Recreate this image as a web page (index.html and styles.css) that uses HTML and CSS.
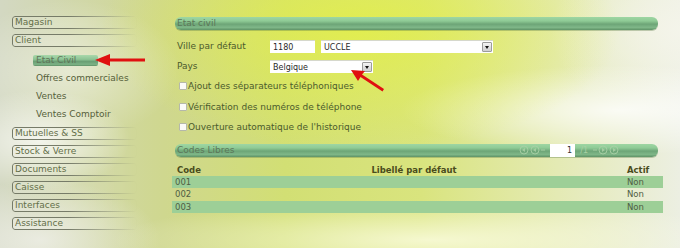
FILE: index.html
```html
<!DOCTYPE html>
<html lang="fr">
<head>
<meta charset="utf-8">
<title>Etat civil</title>
<link rel="stylesheet" href="styles.css">
</head>
<body>
<div class="screen">
  <nav class="sidebar">
    <div class="nav-box">Magasin</div>
    <div class="nav-box">Client</div>
    <ul class="sub">
      <li class="sub-item active"><span class="hl">Etat Civil</span></li>
      <li class="sub-item">Offres commerciales</li>
      <li class="sub-item">Ventes</li>
      <li class="sub-item">Ventes Comptoir</li>
    </ul>
    <div class="nav-box">Mutuelles &amp; SS</div>
    <div class="nav-box">Stock &amp; Verre</div>
    <div class="nav-box">Documents</div>
    <div class="nav-box">Caisse</div>
    <div class="nav-box">Interfaces</div>
    <div class="nav-box">Assistance</div>
  </nav>

  <main class="main">
    <div class="bar"><span class="bar-title">Etat civil</span></div>

    <div class="form-row first">
      <span class="label">Ville par défaut</span>
      <span class="input zip">1180</span>
      <span class="select city"><span class="sel-text">UCCLE</span><span class="sel-btn"></span></span>
    </div>
    <div class="form-row">
      <span class="label">Pays</span>
      <span class="select country"><span class="sel-text">Belgique</span><span class="sel-btn"></span></span>
    </div>

    <div class="checks">
      <div class="check-row"><span class="box"></span>Ajout des séparateurs téléphoniques</div>
      <div class="check-row"><span class="box"></span>Vérification des numéros de téléphone</div>
      <div class="check-row"><span class="box"></span>Ouverture automatique de l'historique</div>
    </div>

    <div class="bar codes">
      <span class="bar-title">Codes Libres</span>
      <span class="pager">
        <svg class="pg-icons" width="28" height="10" viewBox="0 0 28 10">
          <circle cx="5" cy="5" r="4" fill="none" stroke="#a9cfa6" stroke-width="1"/>
          <path d="M3 5 L6 3 L6 7 Z" fill="#a9cfa6"/>
          <circle cx="16" cy="5" r="4" fill="none" stroke="#a9cfa6" stroke-width="1"/>
          <path d="M14 5 L17 3 L17 7 Z" fill="#a9cfa6"/>
          <path d="M22 5 L26 5" stroke="#a9cfa6" stroke-width="1"/>
        </svg>
        <span class="page-input">1</span>
        <span class="page-total">/1</span>
        <svg class="pg-icons" width="28" height="10" viewBox="0 0 28 10">
          <path d="M1 5 L5 5" stroke="#a9cfa6" stroke-width="1"/>
          <circle cx="11" cy="5" r="4" fill="none" stroke="#a9cfa6" stroke-width="1"/>
          <path d="M13 5 L10 3 L10 7 Z" fill="#a9cfa6"/>
          <circle cx="22" cy="5" r="4" fill="none" stroke="#a9cfa6" stroke-width="1"/>
          <path d="M24 5 L21 3 L21 7 Z" fill="#a9cfa6"/>
        </svg>
      </span>
    </div>

    <div class="table">
      <div class="trow thead">
        <span class="c-code">Code</span>
        <span class="c-lib">Libellé par défaut</span>
        <span class="c-act">Actif</span>
      </div>
      <div class="trow alt">
        <span class="c-code">001</span><span class="c-lib"></span><span class="c-act">Non</span>
      </div>
      <div class="trow">
        <span class="c-code">002</span><span class="c-lib"></span><span class="c-act">Non</span>
      </div>
      <div class="trow alt">
        <span class="c-code">003</span><span class="c-lib"></span><span class="c-act">Non</span>
      </div>
    </div>
  </main>

  <svg class="arrow arrow-side" width="52" height="14" viewBox="0 0 52 14">
    <path d="M0 7 L15 1 L15 5.5 L50 5.5 L50 8.5 L15 8.5 L15 13 Z" fill="#e01010"/>
  </svg>
  <svg class="arrow arrow-pays" width="36" height="24" viewBox="0 0 36 24">
    <path d="M1 1 L15 2 L12 5.5 L34 20 L32.5 22.5 L10.5 8 L8 12 Z" fill="#e01010"/>
  </svg>
</div>
</body>
</html>
```

FILE: styles.css
```css
* { box-sizing: border-box; }

html, body {
  margin: 0;
  padding: 0;
}

body {
  width: 680px;
  height: 248px;
  overflow: hidden;
  font-family: "DejaVu Sans", Verdana, sans-serif;
  font-size: 9px;
  color: #4b5a2c;
}

.screen {
  position: relative;
  display: flex;
  width: 680px;
  height: 248px;
  background:
    radial-gradient(ellipse 90px 50px at 40px 140px, rgba(255,255,255,0.75), rgba(255,255,255,0)),
    radial-gradient(ellipse 110px 70px at 70px 70px, rgba(255,255,255,0.45), rgba(255,255,255,0)),
    radial-gradient(ellipse 260px 120px at 360px 30px, rgba(228,240,70,0.8), rgba(228,240,70,0)),
    radial-gradient(ellipse 220px 45px at 620px 110px, rgba(255,255,255,0.8), rgba(255,255,255,0)),
    radial-gradient(ellipse 130px 90px at 680px 30px, rgba(245,245,235,0.9), rgba(245,245,235,0)),
    radial-gradient(ellipse 320px 40px at 430px 240px, rgba(255,255,235,0.75), rgba(255,255,235,0)),
    radial-gradient(ellipse 120px 60px at 40px 240px, rgba(240,240,235,0.8), rgba(240,240,235,0)),
    linear-gradient(90deg, #d3d8c2 0%, #cfd78f 24%, #d2df74 42%, #d9e47e 62%, #e4eab4 82%, #ecefe2 100%);
}

/* Sidebar */
.sidebar {
  width: 160px;
  padding: 16px 0 0 12px;
  flex: none;
}

.nav-box {
  position: relative;
  width: 125px;
  height: 13px;
  margin-bottom: 5px;
  padding-left: 3px;
  line-height: 12px;
  font-size: 9px;
  color: #4d5a2e;
}

.nav-box::before {
  content: "";
  position: absolute;
  inset: 0;
  border: 1px solid #767b68;
  border-radius: 3px;
  background: rgba(255,255,255,0.12);
  -webkit-mask-image: linear-gradient(90deg, #000 0%, #000 45%, rgba(0,0,0,0) 100%);
  mask-image: linear-gradient(90deg, #000 0%, #000 45%, rgba(0,0,0,0) 100%);
  pointer-events: none;
}

.sub {
  list-style: none;
  margin: -1px 0 4px 0;
  padding: 0 0 0 24px;
}

.sub-item {
  height: 18px;
  display: flex;
  align-items: center;
  color: #55603a;
}

.hl {
  display: block;
  width: 65px;
  height: 11px;
  margin-left: -3px;
  padding-left: 3px;
  line-height: 11px;
  color: #5f7458;
  border-radius: 2px;
  background: linear-gradient(180deg, #a9d8ab 0%, #8cc394 40%, #6a9e74 60%, #7cb285 85%, #5f8f66 100%);
}

/* Main */
.main {
  width: 491px;
  margin-left: 12px;
  padding-top: 17px;
  flex: none;
}

.bar {
  display: flex;
  align-items: center;
  justify-content: space-between;
  height: 13px;
  margin: 0 5px 0 3px;
  padding-left: 2px;
  border-radius: 6px;
  background: linear-gradient(180deg, #9ed6a3 0%, #8fcb96 30%, #6da577 55%, #7fb788 80%, #5e9266 100%);
  box-shadow: 0 1px 0 rgba(90,120,70,0.35);
}

.bar-title {
  font-size: 9px;
  line-height: 13px;
  color: #5c7658;
}

.codes {
  margin-top: 6px;
}

.pager {
  display: flex;
  align-items: center;
  margin-right: 38px;
  height: 13px;
}

.pg-icons {
  display: block;
  opacity: 0.9;
}

.page-input {
  display: block;
  width: 25px;
  height: 13px;
  margin: 1px 0 0 3px;
  padding-right: 3px;
  background: #ffffff;
  color: #333;
  font-size: 8px;
  line-height: 13px;
  text-align: right;
}

.page-total {
  margin: 0 4px 0 5px;
  font-size: 8px;
  color: #a8d1a4;
}

/* Form */
.form-row {
  display: flex;
  align-items: center;
  height: 13px;
  margin-top: 7px;
  padding-left: 5px;
}

.form-row.first {
  margin-top: 10px;
}

.label {
  width: 93px;
  flex: none;
  color: #4b5a2c;
  position: relative;
  top: -1px;
}

.input,
.select {
  display: flex;
  align-items: center;
  height: 13px;
  background: #ffffff;
  border-top: 1px solid #d6d8cc;
  font-size: 8px;
  color: #2a2a2a;
}

.input.zip {
  width: 45px;
  padding-left: 3px;
}

.select.city {
  width: 172px;
  margin-left: 6px;
}

.select.country {
  width: 103px;
}

.sel-text {
  flex: 1;
  padding-left: 3px;
}

.sel-btn {
  position: relative;
  width: 10px;
  height: 10px;
  margin-right: 1px;
  border: 1px solid #9c9c9c;
  border-radius: 1px;
  background: linear-gradient(180deg, #f4f4f4, #cfcfcf);
}

.sel-btn::after {
  content: "";
  position: absolute;
  left: 2px;
  top: 3px;
  border-left: 2px solid transparent;
  border-right: 2px solid transparent;
  border-top: 3px solid #111;
}

.checks {
  margin-top: 3px;
}

.check-row {
  display: flex;
  align-items: center;
  height: 20.5px;
  padding-left: 7px;
  color: #4b5a2c;
}

.box {
  width: 8px;
  height: 8px;
  margin-right: 1px;
  border: 1px solid #b5b8aa;
  border-radius: 1px;
  background: #fbfbf8;
}

/* Table */
.table {
  margin-top: 7px;
}

.trow {
  display: grid;
  grid-template-columns: 29px 1fr 36px;
  height: 12.5px;
  align-items: center;
  font-size: 8.5px;
  color: #4f5d44;
}

.trow.thead {
  font-weight: bold;
  color: #4a4c1c;
  font-size: 8.5px;
  height: 12px;
}

.trow.alt {
  background: #9dcf97;
}

.c-code {
  padding-left: 3px;
  white-space: nowrap;
}

.thead .c-code { padding-left: 5px; }

.c-lib {
  text-align: center;
}

.c-act {
  white-space: nowrap;
}

/* Annotation arrows */
.arrow {
  position: absolute;
  display: block;
}

.arrow-side {
  left: 95px;
  top: 53px;
}

.arrow-pays {
  left: 350px;
  top: 69px;
}
```
